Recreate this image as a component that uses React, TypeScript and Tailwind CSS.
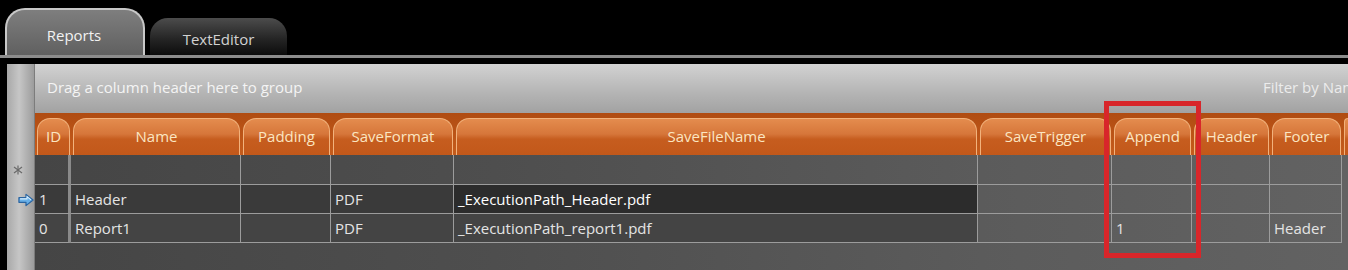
import React from "react";

type Col = { key: string; label: string; width: number };

const columns: Col[] = [
  { key: "id", label: "ID", width: 36 },
  { key: "name", label: "Name", width: 170 },
  { key: "padding", label: "Padding", width: 90 },
  { key: "format", label: "SaveFormat", width: 123 },
  { key: "file", label: "SaveFileName", width: 524 },
  { key: "trigger", label: "SaveTrigger", width: 134 },
  { key: "append", label: "Append", width: 80 },
  { key: "header", label: "Header", width: 78 },
  { key: "footer", label: "Footer", width: 72 },
];

const rows: Record<string, string>[] = [
  { id: "1", name: "Header", format: "PDF", file: "_ExecutionPath_Header.pdf" },
  { id: "0", name: "Report1", format: "PDF", file: "_ExecutionPath_report1.pdf", append: "1", footer: "Header" },
];

function CurrentArrow() {
  return (
    <svg width="17" height="14" viewBox="0 0 17 14">
      <path
        d="M1 4.5 H8.5 V1 L16 7 L8.5 13 V9.5 H1 Z"
        fill="#68b0e8"
        stroke="#2a64a0"
        strokeWidth="1.3"
        strokeLinejoin="round"
      />
      <path d="M2.2 5.8 H9.6 V3.4 L13.8 6.8" fill="none" stroke="#d8efff" strokeWidth="1.1" />
    </svg>
  );
}

function NewRowMark() {
  return (
    <svg width="10" height="10" viewBox="0 0 10 10">
      <g stroke="#6a6a6a" strokeWidth="1.2">
        <line x1="5" y1="0.5" x2="5" y2="9.5" />
        <line x1="1" y1="2" x2="9" y2="8" />
        <line x1="9" y1="2" x2="1" y2="8" />
      </g>
    </svg>
  );
}

export default function App() {
  return (
    <div className="relative w-[1348px] h-[270px] overflow-hidden bg-black font-['Open_Sans',sans-serif] text-[15px]">
      {/* Tabs */}
      <div className="flex items-end h-[55px] pl-[5px] gap-[5px]">
        <div className="w-[140px] h-[47px] rounded-t-[20px] border-2 border-b-0 border-[#c8c8c8] bg-[linear-gradient(to_bottom,#7e7e7e,#606060)] flex justify-center pt-[14px] pr-[2px] text-[#f2f2f2]">
          Reports
        </div>
        <div className="w-[137px] h-[37px] rounded-t-[18px] bg-[linear-gradient(to_bottom,#4c4c4c,#262626_55%,#0c0c0c)] flex justify-center pt-[10px] text-[#d2d2d2]">
          TextEditor
        </div>
      </div>
      <div className="h-[3px] bg-[#8c8c8c]" />
      <div className="h-[6px]" />

      {/* Grid panel */}
      <div className="flex ml-[7px] h-[206px]">
        <div className="w-[28px] shrink-0 border-r border-[#7c7c7c] bg-[linear-gradient(to_right,#a8a8a8,#c6c6c6_45%,#9c9c9c)] flex flex-col">
          <div className="h-[91px]" />
          <div className="h-[30px] flex items-center pl-[6px]">
            <NewRowMark />
          </div>
          <div className="h-[29px] flex items-center pl-[11px]">
            <CurrentArrow />
          </div>
        </div>

        <div className="flex-1 flex flex-col">
          <div className="h-[49px] bg-[linear-gradient(to_bottom,#d2d2d2,#b4b4b4_60%,#a2a2a2)] flex items-center justify-between pl-[12px] text-[#f4f4f4]">
            <span className="pb-[2px]">Drag a column header here to group</span>
            <span className="pb-[2px] text-[#ececec] whitespace-nowrap w-[85px] overflow-hidden">Filter by Name</span>
          </div>

          {/* Column headers */}
          <div className="h-[42px] flex bg-[linear-gradient(to_bottom,#b04c12,#c65c1c)] pt-[5px]">
            {columns.map((c) => (
              <div key={c.key} style={{ width: c.width }} className="shrink-0 pl-[2px] pr-[1px]">
                <div className="h-full rounded-t-[13px] border-[1.5px] border-b-0 border-[#f2b27c] bg-[linear-gradient(to_bottom,#e48c4e_0%,#d6763a_42%,#c65d1f_56%,#c2581a_100%)] flex items-center justify-center pb-[2px] text-[#fbe6c2] font-medium whitespace-nowrap overflow-hidden">
                  {c.label}
                </div>
              </div>
            ))}
            <div className="flex-1 pl-[2px]">
              <div className="h-full rounded-tl-[13px] border-l-[1.5px] border-t-[1.5px] border-[#f2b27c] bg-[linear-gradient(to_bottom,#e48c4e_0%,#d6763a_42%,#c65d1f_56%,#c2581a_100%)]" />
            </div>
          </div>

          {/* Body */}
          <div className="flex-1 bg-[linear-gradient(to_right,#454545,#4e4e4e_35%,#5c5c5c_75%,#626262)] text-[#e4e4e4]">
            <div className="flex h-[30px]">
              {columns.map((c) => (
                <div
                  key={c.key}
                  style={{ width: c.width }}
                  className={`shrink-0 border-r border-b border-[#9c9c9c] ${c.key === "id" ? "border-r-[3px] border-r-[#8a8a8a]" : ""}`}
                />
              ))}
            </div>
            {rows.map((r, i) => (
              <div key={i} className="flex h-[29px]">
                {columns.map((c, ci) => {
                  const selected = i === 0 && ci < 4;
                  const editing = i === 0 && c.key === "file";
                  return (
                    <div
                      key={c.key}
                      style={{ width: c.width }}
                      className={`shrink-0 border-r border-b border-[#9c9c9c] flex items-center pl-[4px] whitespace-nowrap overflow-hidden ${
                        c.key === "id" ? "border-r-[3px] border-r-[#8a8a8a]" : ""
                      } ${selected ? "bg-[#3a3a3a]" : ""} ${editing ? "bg-[#2c2c2c] text-white" : ""} ${
                        i === 1 && ci < 5 ? "bg-[#444444]" : ""
                      }`}
                    >
                      {r[c.key] ?? ""}
                    </div>
                  );
                })}
              </div>
            ))}
          </div>
        </div>
      </div>

      {/* Highlight box */}
      <div className="absolute left-[1104px] top-[101px] w-[97px] h-[157px] border-[5px] border-[#d8262a]" />
    </div>
  );
}
